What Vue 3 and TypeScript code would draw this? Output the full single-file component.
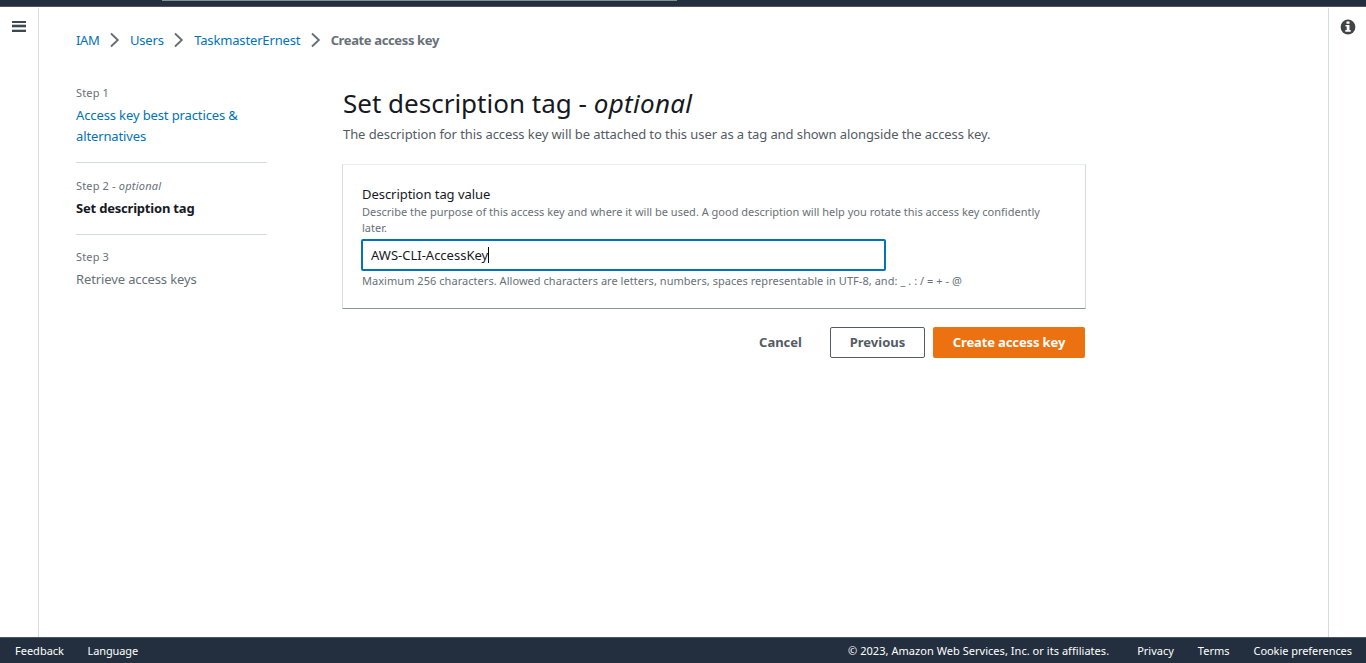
<script setup lang="ts">
import { ref } from 'vue'

interface Step {
  label: string
  optional?: boolean
  title: string
  state: 'done' | 'active' | 'pending'
}

const crumbs = ['IAM', 'Users', 'TaskmasterErnest']
const steps: Step[] = [
  { label: 'Step 1', title: 'Access key best practices & alternatives', state: 'done' },
  { label: 'Step 2 - ', optional: true, title: 'Set description tag', state: 'active' },
  { label: 'Step 3', title: 'Retrieve access keys', state: 'pending' },
]
const tagValue = ref('AWS-CLI-AccessKey')
</script>

<template>
  <div class="console">
    <header class="topbar"><div class="search-edge"></div></header>
    <div class="body">
      <aside class="rail left">
        <svg width="14" height="11" viewBox="0 0 14 11" shape-rendering="crispEdges">
          <path d="M0 0h14v2H0zM0 4h14v2H0zM0 9h14v2H0z" fill="#414750" />
          <path d="M0 3h14v1H0zM0 6h14v1H0zM0 8h14v1H0z" fill="#c4c6c9" />
        </svg>
      </aside>
      <main class="main">
        <nav class="crumbs">
          <template v-for="c in crumbs" :key="c">
            <a class="crumb">{{ c }}</a>
            <svg class="chev" width="10" height="16" viewBox="0 0 10 16">
              <path d="M1 1.5 7.8 8 1 14.5" fill="none" stroke="#687078" stroke-width="1.9" />
            </svg>
          </template>
          <span class="current">Create access key</span>
        </nav>
        <div class="wizard">
          <ol class="steps">
            <li v-for="s in steps" :key="s.title" :class="['step', s.state]">
              <div class="step-label">{{ s.label }}<em v-if="s.optional">optional</em></div>
              <div class="step-title">{{ s.title }}</div>
            </li>
          </ol>
          <section class="content">
            <h1><span>Set description tag -</span><em>optional</em></h1>
            <p class="lead">The description for this access key will be attached to this user as a tag and shown alongside the access key.</p>
            <div class="card">
              <div class="field-label">Description tag value</div>
              <div class="hint">Describe the purpose of this access key and where it will be used. A good description will help you rotate this access key confidently later.</div>
              <div class="input"><span>{{ tagValue }}</span><i class="caret"></i></div>
              <div class="hint constraint">Maximum 256 characters. Allowed characters are letters, numbers, spaces representable in UTF-8, and: _ . : / = + - @</div>
            </div>
            <div class="actions">
              <button class="btn link">Cancel</button>
              <button class="btn normal">Previous</button>
              <button class="btn primary">Create access key</button>
            </div>
          </section>
        </div>
      </main>
      <aside class="rail right">
        <svg width="16" height="16" viewBox="0 0 16 16">
          <circle cx="8" cy="8" r="7.4" fill="#414345" />
          <path d="M6.5 2.5h3v2.3h-3zM5.5 6h4v5h1.2v1.7H5.3V11h1.4V7.6H5.5z" fill="#fff" />
        </svg>
      </aside>
    </div>
    <footer class="footer">
      <span>Feedback</span>
      <span class="language">Language</span>
      <span class="copy">© 2023, Amazon Web Services, Inc. or its affiliates.</span>
      <span class="privacy">Privacy</span>
      <span class="terms">Terms</span>
      <span class="cookies">Cookie preferences</span>
    </footer>
  </div>
</template>

<style>
body {
  background: #fff;
  overflow: hidden;
}
</style>

<style scoped>
* {
  box-sizing: border-box;
}
.console {
  height: 663px;
  display: flex;
  flex-direction: column;
  font-family: "Noto Sans", "Open Sans", sans-serif;
  font-size: 13px;
  color: #16191f;
}
.topbar {
  height: 7px;
  background: #232f3e;
  border-bottom: 1px solid #4b5561;
}
.search-edge {
  width: 515px;
  height: 1px;
  margin-left: 162px;
  background: #84928f;
}
.body {
  flex: 1;
  display: flex;
  padding-top: 1px;
}
.rail {
  flex: none;
  display: flex;
  align-items: flex-start;
}
.left {
  width: 39px;
  padding: 13px 0 0 12px;
  border-right: 1px solid #d5dbdb;
}
.right {
  width: 38px;
  padding: 11px 0 0 11px;
  border-left: 1px solid #d5dbdb;
}
.main {
  flex: 1;
  padding: 22px 0 0 37px;
}
.crumbs {
  display: flex;
  align-items: center;
  height: 20px;
  line-height: 20px;
  letter-spacing: -0.15px;
}
.crumb {
  color: #0073bb;
}
.crumb:first-child {
  letter-spacing: -0.3px;
}
.chev {
  margin: 0 10px 0 10.3px;
}
.current {
  font-weight: 700;
  color: #687078;
  letter-spacing: -0.37px;
}
.wizard {
  display: flex;
  margin-top: 32px;
}
.steps {
  width: 191px;
  margin: 0;
  padding: 0;
  list-style: none;
}
.step {
  border-bottom: 1px solid #d5dbdb;
  padding-bottom: 15px;
  margin-bottom: 12px;
}
.step:last-child {
  border: 0;
}
.step-label {
  height: 22px;
  line-height: 22px;
  font-size: 11px;
  color: #687078;
  letter-spacing: 0.15px;
}
.step-label em {
  letter-spacing: 0.25px;
}
.step-title {
  line-height: 21px;
  padding: 1px 0 0;
  color: #687078;
  letter-spacing: -0.12px;
}
.done .step-title {
  color: #0073bb;
}
.active {
  margin-bottom: 11px;
}
.active .step-title {
  color: #16191f;
  font-weight: 700;
  letter-spacing: -0.2px;
}
.content {
  width: 744px;
  margin-left: 75px;
}
h1 {
  display: flex;
  gap: 7px;
  margin: 3px 0 0 1px;
  font-size: 26px;
  font-weight: 400;
  line-height: 36px;
}
h1 em {
  letter-spacing: 0.28px;
}
.lead {
  margin: 3px 0 0 1px;
  line-height: 20px;
  color: #545b64;
  letter-spacing: -0.085px;
  white-space: nowrap;
}
.card {
  height: 145px;
  margin-top: 20px;
  padding: 19px 20px 0 18px;
  border: 1px solid #d5dbdb;
  border-top-color: #eaeded;
  border-bottom-color: #879596;
  border-radius: 1px;
}
.field-label {
  line-height: 20px;
  padding-left: 1px;
  letter-spacing: -0.05px;
}
.hint {
  padding-left: 1px;
  width: 690px;
  font-size: 11px;
  line-height: 16px;
  color: #687078;
  letter-spacing: 0.005px;
}
.input {
  display: flex;
  align-items: center;
  width: 525px;
  height: 32px;
  margin-top: 3px;
  padding-left: 8px;
  border: 2px solid #0073bb;
  border-radius: 2px;
}
.caret {
  width: 1px;
  height: 16px;
  background: #000;
}
.constraint {
  margin-top: 2px;
  letter-spacing: 0.042px;
}
.actions {
  display: flex;
  justify-content: flex-end;
  gap: 8px;
  margin: 18px 1px 0 0;
}
.btn {
  height: 31px;
  padding: 0;
  border: 1px solid transparent;
  border-radius: 2px;
  background: none;
  font: 700 13px/29px "Noto Sans", "Open Sans", sans-serif;
  color: #545b64;
}
.link {
  width: 83px;
}
.normal {
  width: 95px;
  border-color: #545b64;
}
.primary {
  width: 152px;
  background: #ec7211;
  color: #fff;
  letter-spacing: -0.13px;
}
.footer {
  display: flex;
  height: 26px;
  padding: 0 14px 0 15px;
  border-top: 1px solid #4b5561;
  background: #232f3e;
  color: #fff;
  font-size: 11px;
  line-height: 26px;
}
.language {
  margin-left: 23.5px;
  letter-spacing: -0.1px;
}
.copy {
  margin-left: auto;
  letter-spacing: 0.04px;
}
.privacy {
  margin-left: 28px;
}
.terms {
  margin-left: 24px;
}
.cookies {
  margin-left: 24px;
  letter-spacing: -0.05px;
}
</style>
